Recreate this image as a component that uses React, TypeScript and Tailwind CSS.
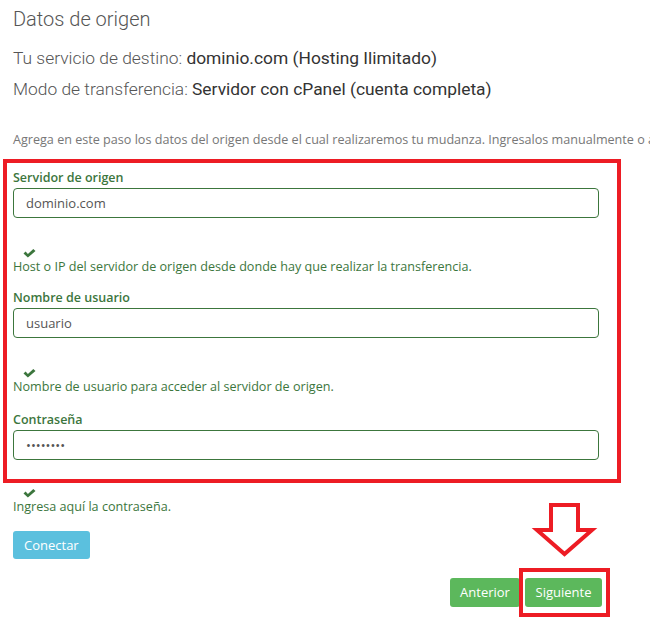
import React from "react";

const Check = () => (
  <svg width="13" height="9" viewBox="0 0 13 9" className="block">
    <path d="M0.5 4.6 L2.6 2.6 L4.9 4.9 L10.3 0 L12.5 2 L4.9 8.6 Z" fill="#3c763d" />
  </svg>
);

const Help = ({ text }: { text: string }) => (
  <div>
    <div className="h-[12px] pl-[10px] pt-[3px]">
      <Check />
    </div>
    <div className="h-[18px] text-[12.6px] leading-[18px] text-[#3c763d]">{text}</div>
  </div>
);

const Field = ({ label, value, type = "text" }: { label: string; value: string; type?: string }) => (
  <div>
    <div className="h-[20px] text-[12.5px] font-semibold leading-[20px] text-[#3c763d]">{label}</div>
    <input
      readOnly
      type={type}
      value={value}
      className="block h-[30px] w-[586px] rounded-[4px] border border-[#3c763d] bg-white px-[12px] text-[13px] text-[#555] outline-none"
      style={{ fontFamily: "'Open Sans', sans-serif" }}
    />
  </div>
);

export default function App() {
  return (
    <div
      className="relative h-[631px] w-[650px] overflow-hidden bg-white"
      style={{ fontFamily: "'Open Sans', sans-serif" }}
    >
      <div className="px-[13px]" style={{ fontFamily: "Roboto, sans-serif" }}>
        <div className="pt-[6px] text-[20px] font-light leading-[26px] text-[#555]">Datos de origen</div>
        <div className="mt-[14px] text-[17.4px] font-light leading-[24px] text-[#555]">
          Tu servicio de destino: <span className="font-normal text-[#333]">dominio.com (Hosting Ilimitado)</span>
        </div>
        <div className="mt-[7px] text-[17.4px] font-light leading-[24px] text-[#555]">
          Modo de transferencia: <span className="font-normal text-[#333]">Servidor con cPanel (cuenta completa)</span>
        </div>
      </div>
      <div
        className="mt-[30px] whitespace-nowrap pl-[13px] text-[12.6px] leading-[18px] text-[#777]"
        style={{ fontFamily: "'Open Sans', sans-serif" }}
      >
        Agrega en este paso los datos del origen desde el cual realizaremos tu mudanza. Ingresalos manualmente o a
      </div>
      <div className="ml-[3px] mt-[10px] w-[618px] border-[4px] border-[#ed1c24] pb-[19px] pl-[6px] pt-[5px]">
        <Field label="Servidor de origen" value="dominio.com" />
        <div className="pt-[28px] pb-[12px]">
          <Help text="Host o IP del servidor de origen desde donde hay que realizar la transferencia." />
        </div>
        <Field label="Nombre de usuario" value="usuario" />
        <div className="pt-[28px] pb-[14px]">
          <Help text="Nombre de usuario para acceder al servidor de origen." />
        </div>
        <Field label="Contraseña" value="12345678" type="password" />
      </div>
      <div className="px-[13px] pt-[3px]">
        <Help text="Ingresa aquí la contraseña." />
        <button className="mt-[15px] h-[28px] rounded-[3px] bg-[#5bc0de] px-[11px] text-[13px] leading-[28px] text-white">
          Conectar
        </button>
        <div className="mt-[19px] flex w-[589px] justify-end gap-[5px]">
          <button className="h-[29px] w-[70px] rounded-[3px] bg-[#5cb85c] text-[13px] text-white">Anterior</button>
          <button className="h-[29px] w-[77px] rounded-[3px] bg-[#5cb85c] text-[13px] text-white">Siguiente</button>
        </div>
      </div>
      <div className="pointer-events-none absolute left-[519px] top-[568px] h-[49px] w-[91px] border-[4px] border-[#ed1c24]" />
      <svg className="absolute left-[530px] top-[500px]" width="70" height="60" viewBox="0 0 70 60">
        <path
          d="M21 5 L48 5 L48 30 L62 30 L34.5 54 L7 30 L21 30 Z"
          fill="none"
          stroke="#ed1c24"
          strokeWidth="4"
          strokeLinejoin="miter"
        />
      </svg>
    </div>
  );
}
